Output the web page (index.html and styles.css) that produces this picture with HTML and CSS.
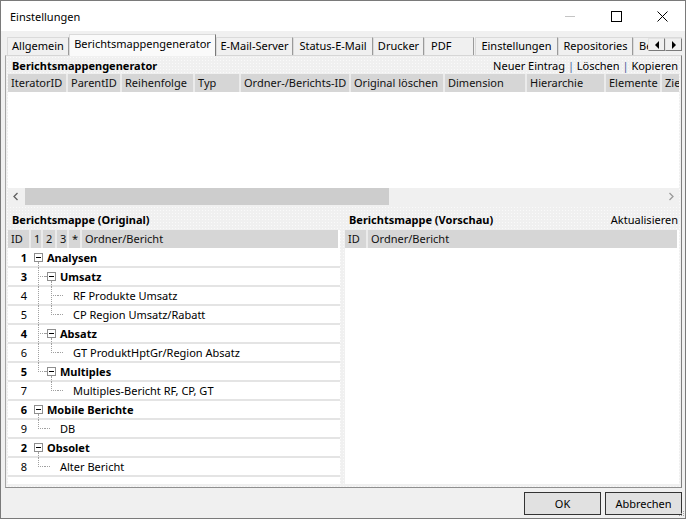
FILE: index.html
```html
<!DOCTYPE html>
<html lang="de">
<head>
<meta charset="utf-8">
<title>Einstellungen</title>
<link rel="stylesheet" href="styles.css">
</head>
<body>
<div class="window">
  <header class="titlebar">
    <span class="title">Einstellungen</span>
    <div class="controls">
      <span class="ctl"><svg width="10" height="10" viewBox="0 0 10 10"><path d="M0 5.5H10" stroke="#c4c4c4" stroke-width="1"/></svg></span>
      <span class="ctl"><svg width="11" height="11" viewBox="0 0 11 11"><rect x="0.5" y="0.5" width="10" height="10" fill="none" stroke="#000" stroke-width="1"/></svg></span>
      <span class="ctl"><svg width="11" height="11" viewBox="0 0 11 11"><path d="M0.5 0.5L10.5 10.5M10.5 0.5L0.5 10.5" stroke="#000" stroke-width="1"/></svg></span>
    </div>
  </header>

  <main class="client">
    <div class="tabstrip">
      <div class="tabs">
        <div class="tab w-allg">Allgemein</div>
        <div class="tab tab-active w-gen">Berichtsmappengenerator</div>
        <div class="tab w-mail">E-Mail-Server</div>
        <div class="tab w-status">Status-E-Mail</div>
        <div class="tab w-druck">Drucker</div>
        <div class="tab w-pdf">PDF</div>
        <div class="tab w-einst">Einstellungen</div>
        <div class="tab w-repo">Repositories</div>
        <div class="tab w-be">Benutzer</div>
      </div>
      <div class="tab-scroll">
        <span class="ts-btn"><svg width="6" height="8" viewBox="0 0 6 8"><path d="M5 0V8L1 4Z" fill="#000"/></svg></span>
        <span class="ts-btn"><svg width="6" height="8" viewBox="0 0 6 8"><path d="M1 0V8L5 4Z" fill="#000"/></svg></span>
      </div>
    </div>

    <section class="tabpanel">
      <div class="section-head">
        <b>Berichtsmappengenerator</b>
        <span class="links">Neuer Eintrag <span class="sep">|</span> Löschen <span class="sep">|</span> Kopieren</span>
      </div>

      <div class="grid">
        <div class="grid-head">
          <span class="hcell c-it">IteratorID</span>
          <span class="hcell c-par">ParentID</span>
          <span class="hcell c-rei">Reihenfolge</span>
          <span class="hcell c-typ">Typ</span>
          <span class="hcell c-ord">Ordner-/Berichts-ID</span>
          <span class="hcell c-orig">Original löschen</span>
          <span class="hcell c-dim">Dimension</span>
          <span class="hcell c-hier">Hierarchie</span>
          <span class="hcell c-elem">Elemente</span>
          <span class="hcell c-ziel">Ziel</span>
        </div>
        <div class="grid-body"></div>
        <div class="hscroll">
          <span class="sb-btn"><svg width="17" height="17" viewBox="0 0 17 17"><path d="M9.5 5L6 8.5L9.5 12" fill="none" stroke="#606060" stroke-width="1.3"/></svg></span>
          <div class="sb-track"><div class="sb-thumb"></div></div>
          <span class="sb-btn"><svg width="17" height="17" viewBox="0 0 17 17"><path d="M7.5 5L11 8.5L7.5 12" fill="none" stroke="#9a9a9a" stroke-width="1.3"/></svg></span>
        </div>
      </div>

      <div class="lower">
        <div class="pane pane-left">
          <div class="section-head"><b>Berichtsmappe (Original)</b></div>
          <div class="tree">
            <div class="grid-head">
              <span class="hcell t-id">ID</span>
              <span class="hcell t-n">1</span>
              <span class="hcell t-n2">2</span>
              <span class="hcell t-n">3</span>
              <span class="hcell t-star">*</span>
              <span class="hcell t-name">Ordner/Bericht</span>
            </div>
            <div class="tree-body">
              <div class="row folder"><span class="id">1</span><span class="g g-box open"><i class="box"></i></span><span class="label">Analysen</span></div>
              <div class="row folder"><span class="id">3</span><span class="g g-t"></span><span class="g g-box open child"><i class="box"></i></span><span class="label">Umsatz</span></div>
              <div class="row"><span class="id">4</span><span class="g g-v"></span><span class="g g-t"></span><span class="g g-stub"></span><span class="label">RF Produkte Umsatz</span></div>
              <div class="row"><span class="id">5</span><span class="g g-v"></span><span class="g g-l"></span><span class="g g-stub"></span><span class="label">CP Region Umsatz/Rabatt</span></div>
              <div class="row folder"><span class="id">4</span><span class="g g-t"></span><span class="g g-box open child"><i class="box"></i></span><span class="label">Absatz</span></div>
              <div class="row"><span class="id">6</span><span class="g g-v"></span><span class="g g-l"></span><span class="g g-stub"></span><span class="label">GT ProduktHptGr/Region Absatz</span></div>
              <div class="row folder"><span class="id">5</span><span class="g g-l"></span><span class="g g-box open child"><i class="box"></i></span><span class="label">Multiples</span></div>
              <div class="row"><span class="id">7</span><span class="g"></span><span class="g g-l"></span><span class="g g-stub"></span><span class="label">Multiples-Bericht RF, CP, GT</span></div>
              <div class="row folder"><span class="id">6</span><span class="g g-box open"><i class="box"></i></span><span class="label">Mobile Berichte</span></div>
              <div class="row"><span class="id">9</span><span class="g g-l"></span><span class="g g-stub"></span><span class="label">DB</span></div>
              <div class="row folder"><span class="id">2</span><span class="g g-box open"><i class="box"></i></span><span class="label">Obsolet</span></div>
              <div class="row"><span class="id">8</span><span class="g g-l"></span><span class="g g-stub"></span><span class="label">Alter Bericht</span></div>
            </div>
          </div>
        </div>

        <div class="pane pane-right">
          <div class="section-head">
            <b>Berichtsmappe (Vorschau)</b>
            <span class="links">Aktualisieren</span>
          </div>
          <div class="tree">
            <div class="grid-head">
              <span class="hcell t-id">ID</span>
              <span class="hcell t-name">Ordner/Bericht</span>
            </div>
            <div class="tree-body"></div>
          </div>
        </div>
      </div>
    </section>

    <footer class="buttons">
      <button class="btn">OK</button>
      <button class="btn">Abbrechen</button>
    </footer>
  </main>

  <svg class="grip" width="8" height="8" viewBox="0 0 8 8">
    <rect x="6" y="1" width="1" height="1" fill="#a0a0a0"/>
    <rect x="4" y="3" width="1" height="1" fill="#a0a0a0"/>
    <rect x="6" y="3" width="1" height="1" fill="#a0a0a0"/>
    <rect x="2" y="5" width="1" height="1" fill="#a0a0a0"/>
    <rect x="4" y="5" width="1" height="1" fill="#a0a0a0"/>
    <rect x="6" y="5" width="1" height="1" fill="#a0a0a0"/>
  </svg>
</div>
</body>
</html>
```

FILE: styles.css
```css
* { box-sizing: border-box; }

html, body { margin: 0; padding: 0; }

body {
  width: 686px;
  height: 519px;
  overflow: hidden;
  font-family: "Noto Sans", "Liberation Sans", sans-serif;
  font-size: 11px;
  color: #000;
  background: #fff;
}

.window {
  position: relative;
  width: 686px;
  height: 519px;
  border: 1px solid #7a7a7a;
  display: flex;
  flex-direction: column;
  background: #f0f0f0;
}

/* Title bar */
.titlebar {
  flex: none;
  height: 30px;
  background: #fff;
  display: flex;
  align-items: center;
}
.title {
  padding-left: 9px;
  font-size: 11px;
  color: #000;
}
.controls {
  margin-left: auto;
  display: flex;
  height: 100%;
}
.ctl {
  width: 46px;
  display: flex;
  align-items: center;
  justify-content: center;
}
.ctl svg { display: block; }

/* Client area */
.client {
  flex: 1;
  display: flex;
  flex-direction: column;
  padding: 0 3px 0 4px;
}

/* Tabs */
.tabstrip {
  position: relative;
  z-index: 1;
  height: 25px;
  margin-bottom: -1px;
  overflow: hidden;
}
.tabs {
  display: flex;
  align-items: flex-start;
  padding-left: 2px;
  height: 25px;
}
.tab {
  flex: none;
  margin-top: 6px;
  height: 18px;
  line-height: 16px;
  text-align: center;
  white-space: nowrap;
  overflow: hidden;
  border: 1px solid;
  border-bottom: none;
  border-color: #dadada #9a9a9a transparent #dadada;
  background: #f0f0f0;
}
.tab-active {
  margin-top: 3px;
  height: 22px;
  line-height: 18px;
  background: #fafafa;
  border-color: #dadada #7a7a7a transparent #dadada;
}
.w-allg { width: 62px; }
.w-gen { width: 147px; }
.w-mail { width: 77px; }
.w-status { width: 80px; }
.w-druck { width: 51px; }
.w-pdf { width: 50px; text-align: left; padding-left: 6px; margin-right: 1px; }
.w-einst { width: 83px; }
.w-repo { width: 75px; }
.w-be { width: 70px; text-align: left; padding-left: 5px; }

.tab-scroll {
  position: absolute;
  top: 7px;
  right: 0;
  display: flex;
}
.ts-btn {
  width: 17px;
  height: 13px;
  display: flex;
  align-items: center;
  justify-content: center;
  background: #f0f0f0;
  border: 1px solid;
  border-color: #e3e3e3 #7a7a7a #7a7a7a #e3e3e3;
}
.ts-btn svg { display: block; }

/* Tab panel */
.tabpanel {
  flex: none;
  height: 433px;
  border: 1px solid;
  border-color: #d6d6d6 #7f7f7f #8f8f8f #a6a6a6;
  padding: 0 2px;
  display: flex;
  flex-direction: column;
  background-color: #f0f0f0;
  background-image: radial-gradient(circle, #fafafa 0.55px, transparent 0.75px);
  background-size: 3px 3px;
}

.section-head {
  flex: none;
  height: 18px;
  display: flex;
  align-items: center;
  justify-content: space-between;
  padding: 0 1px 0 4px;
  white-space: nowrap;
}
.section-head b { font-weight: 700; }
.links { color: #000; }
.sep { color: #4b5b9b; }

/* Generator grid */
.grid {
  flex: none;
  display: flex;
  flex-direction: column;
}
.grid-head {
  flex: none;
  display: flex;
  gap: 2px;
  height: 18px;
  background: #ebebeb;
  overflow: hidden;
}
.hcell {
  flex: none;
  background: #d6d6d6;
  padding-left: 3px;
  line-height: 18px;
  white-space: nowrap;
  overflow: hidden;
  color: #111;
}
.c-it { width: 58px; }
.c-par { width: 52px; }
.c-rei { width: 71px; }
.c-typ { width: 44px; }
.c-ord { width: 108px; }
.c-orig { width: 92px; }
.c-dim { width: 80px; }
.c-hier { width: 77px; }
.c-elem { width: 54px; }
.c-ziel { flex: 1; }

.grid-body {
  height: 96px;
  background: #fff;
}

.hscroll {
  height: 17px;
  display: flex;
  background: #f0f0f0;
}
.sb-btn {
  flex: none;
  width: 17px;
  height: 17px;
}
.sb-btn svg { display: block; }
.sb-track {
  flex: 1;
  display: flex;
}
.sb-thumb {
  width: 364px;
  background: #cdcdcd;
}

/* Lower area */
.lower {
  flex: 1;
  display: flex;
  gap: 5px;
  min-height: 0;
}
.pane {
  display: flex;
  flex-direction: column;
}
.pane-left { width: 332px; flex: none; }
.pane-right { flex: 1; }
.lower .section-head {
  height: 25px;
  padding-top: 3px;
}
.tree {
  flex: 1;
  display: flex;
  flex-direction: column;
  background: #fff;
  margin-bottom: 3px;
}
.tree .grid-head {
  height: 18px;
  margin-right: 2px;
}
.t-id { width: 21px; }
.t-n { width: 10px; }
.t-n2 { width: 12px; }
.t-star { width: 11px; padding-left: 3px; }
.t-name { flex: 1; }
.pane-right .t-name { padding-left: 3px; }

.tree-body {
  flex: 1;
  padding-top: 1px;
}

.row {
  display: flex;
  height: 19px;
  background: linear-gradient(to top, #e4e4e4 2px, transparent 2px);
}
.id {
  flex: none;
  width: 24px;
  padding-right: 5px;
  text-align: right;
  line-height: 17px;
}
.label {
  margin-left: 2px;
  line-height: 17px;
  white-space: nowrap;
}
.folder .id,
.folder .label { font-weight: 700; }

/* Tree guides */
.g {
  flex: none;
  position: relative;
  width: 13px;
  height: 19px;
}
.g-v::before,
.g-t::before,
.g-l::before {
  content: "";
  position: absolute;
  left: 6px;
  top: 0;
  bottom: 0;
  border-left: 1px dotted #a0a0a0;
}
.g-l::before { bottom: auto; height: 9px; }
.g-t::after,
.g-l::after {
  content: "";
  position: absolute;
  left: 6px;
  right: 0;
  top: 8px;
  border-top: 1px dotted #a0a0a0;
}
.g-stub::after {
  content: "";
  position: absolute;
  left: 0;
  width: 5px;
  top: 8px;
  border-top: 1px dotted #a0a0a0;
}
.box {
  position: absolute;
  left: 2px;
  top: 4px;
  width: 9px;
  height: 9px;
  border: 1px solid #8e8e8e;
  background: #fff;
  z-index: 1;
}
.box::after {
  content: "";
  position: absolute;
  left: 1px;
  top: 3px;
  width: 5px;
  height: 1px;
  background: #000;
}
.g-box.open::before {
  content: "";
  position: absolute;
  left: 6px;
  top: 13px;
  bottom: 0;
  border-left: 1px dotted #a0a0a0;
}
.g-box.child::after {
  content: "";
  position: absolute;
  left: 0;
  width: 2px;
  top: 8px;
  border-top: 1px dotted #a0a0a0;
}

/* Buttons */
.buttons {
  flex: 1;
  display: flex;
  justify-content: flex-end;
  align-items: flex-start;
  gap: 4px;
  padding-top: 4px;
}
.btn {
  width: 77px;
  height: 23px;
  margin: 0;
  padding: 0;
  border: 1px solid #333;
  background: #e1e1e1;
  font-family: inherit;
  font-size: 11px;
  color: #000;
}

.grip {
  position: absolute;
  right: 0;
  bottom: 0;
}
```
